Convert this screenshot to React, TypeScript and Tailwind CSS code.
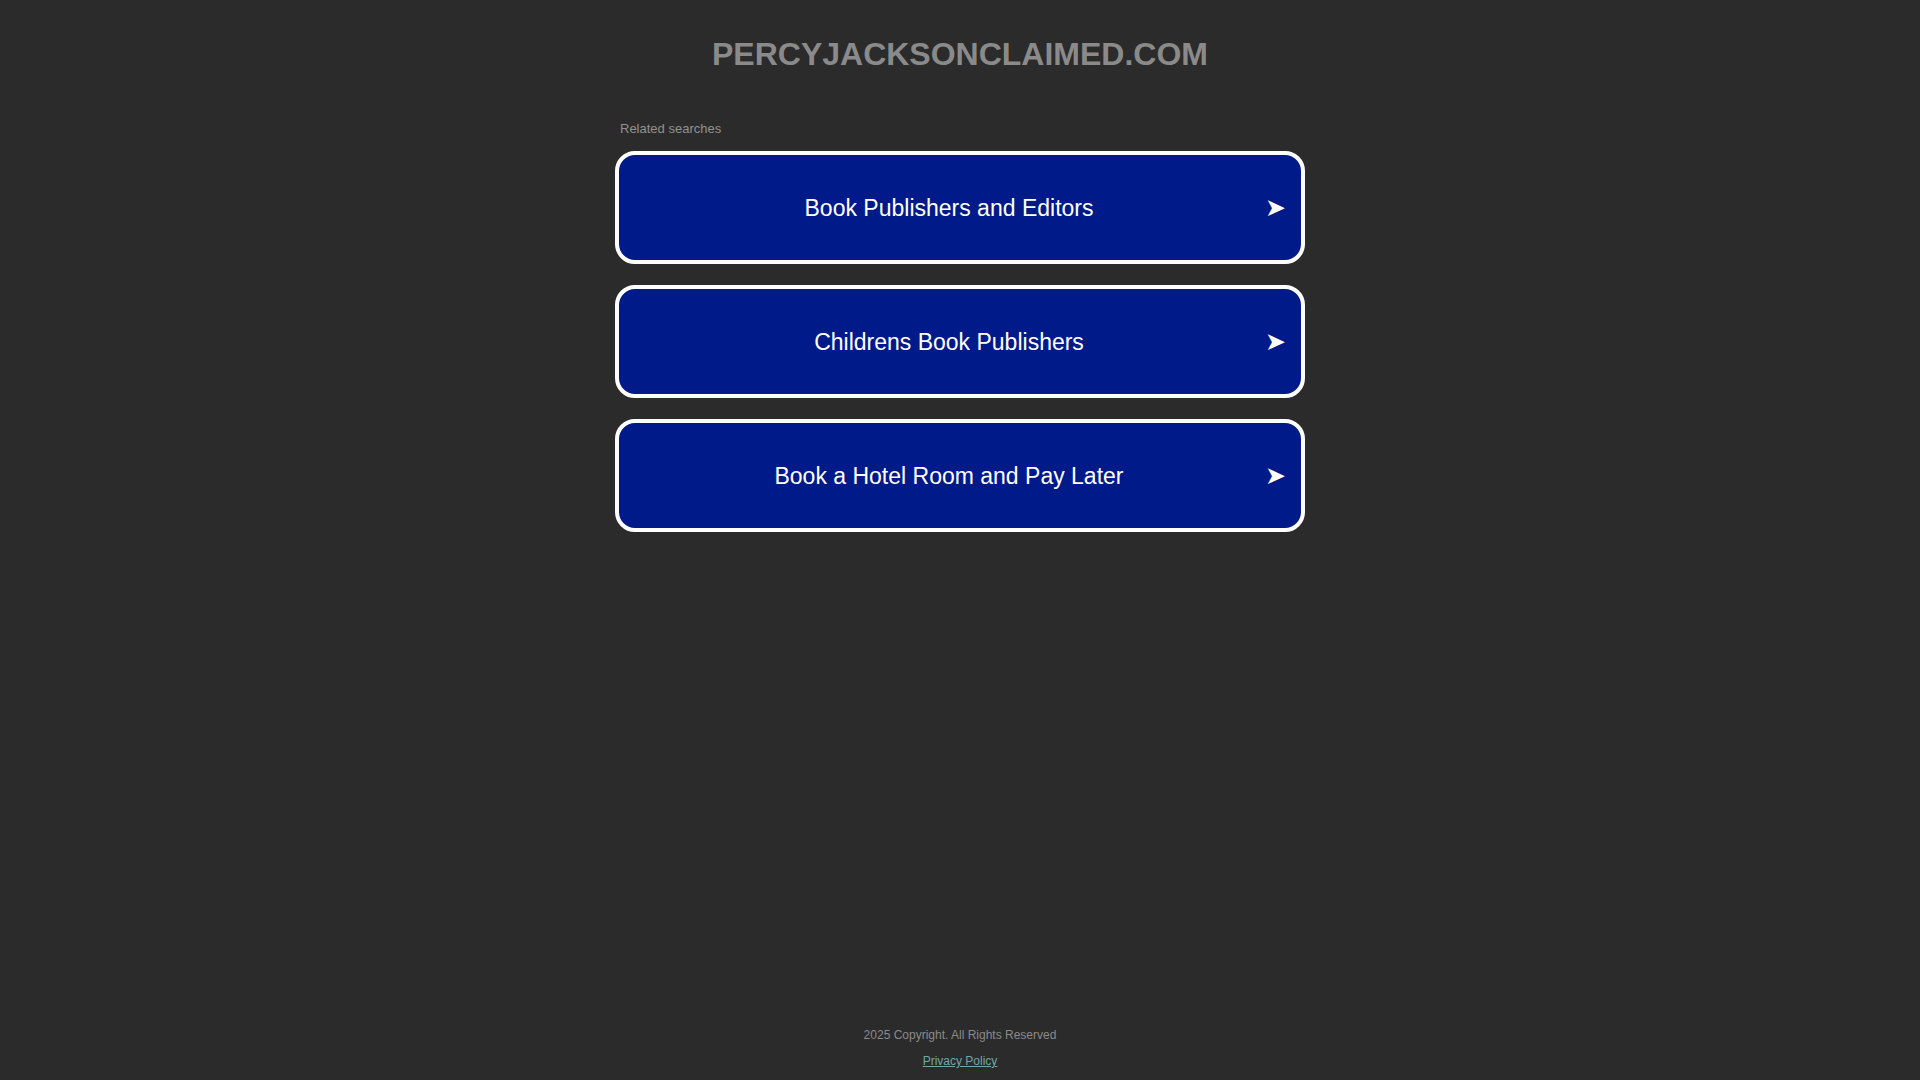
const searches = [
  "Book Publishers and Editors",
  "Childrens Book Publishers",
  "Book a Hotel Room and Pay Later",
];

export default function App() {
  return (
    <div className="min-h-screen flex flex-col bg-[#2b2b2b] font-['Liberation_Sans',Arial,sans-serif]">
      <main className="flex-1 flex flex-col items-center pt-[38px]">
        {/* domain title */}
        <h1 className="text-[32px] leading-[32px] font-bold text-[#8a8a8a] uppercase">
          percyjacksonclaimed.com
        </h1>

        <div className="w-[690px] mt-[52px]">
          <p className="text-[13px] leading-[13px] text-[#919191] pl-[5px]">Related searches</p>

          <div className="mt-[16px] flex flex-col gap-[21px]">
            {searches.map((s) => (
              <a
                key={s}
                href="#"
                className="h-[113px] flex items-center bg-[#011a8a] border-4 border-white rounded-[20px] pl-[14px] pr-[15px] text-white"
              >
                <span className="flex-1 text-center text-[23px] leading-[23px] pt-[2px]">{s}</span>
                <span className="font-['DejaVu_Sans',sans-serif] text-[25px] leading-none w-[21px] flex justify-center">
                  ➤
                </span>
              </a>
            ))}
          </div>
        </div>
      </main>

      {/* footer */}
      <footer className="flex flex-col items-center pb-[13px] text-[12px] leading-[12px]">
        <p className="text-[#8a8a8a]">2025 Copyright. All Rights Reserved</p>
        <a href="#" className="mt-[14px] text-[#6fa8a8] underline">
          Privacy Policy
        </a>
      </footer>
    </div>
  );
}
